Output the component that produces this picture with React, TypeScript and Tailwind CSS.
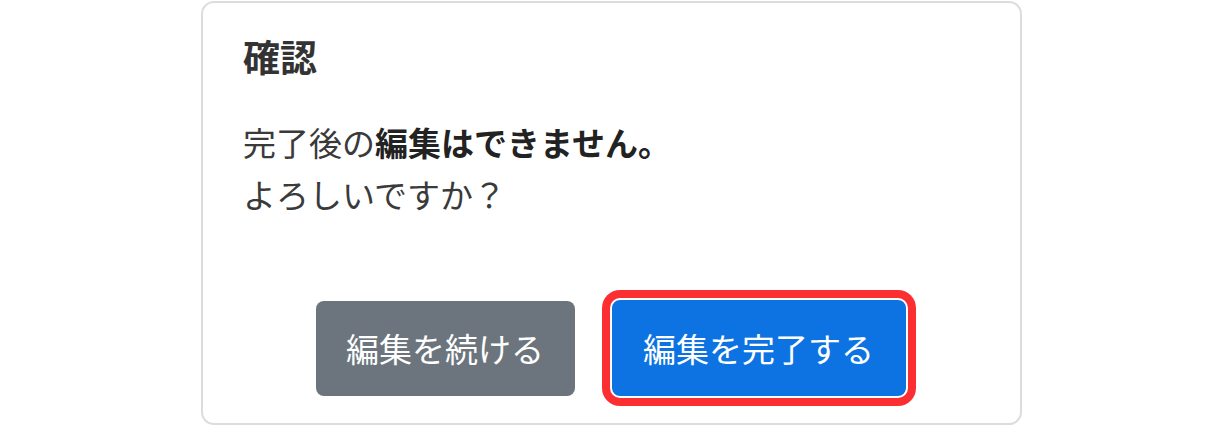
import React from 'react';

const App: React.FC = () => {
  return (
    <div
      className="w-[1223px] h-[429px] bg-white flex justify-center"
      style={{ fontFamily: '"Noto Sans CJK JP", "Noto Sans", sans-serif' }}
    >
      <div className="mt-[1px] w-[821px] h-[424px] border-2 border-[#dcdcdc] rounded-[13px] bg-white px-[40px] pt-[29px] flex flex-col">
        <h2 className="text-[37px] leading-[48px] font-bold text-[#333333]">確認</h2>

        <p className="mt-[36px] text-[33px] leading-[52px] text-[#3a3a3a]">
          完了後の<span className="font-bold text-[#222222]">編集はできません。</span>
          <br />
          よろしいですか？
        </p>

        <div className="mt-auto mb-[25px] flex justify-center items-center gap-[35px]">
          <button className="w-[259px] h-[95px] rounded-[8px] bg-[#6c757d] text-white text-[33px] leading-none">
            編集を続ける
          </button>
          <button className="w-[298px] h-[100px] rounded-[10px] border-2 border-white bg-[#0d73e2] text-white text-[33px] leading-none ring-8 ring-[#fb2f32]">
            編集を完了する
          </button>
        </div>
      </div>
    </div>
  );
};

export default App;
